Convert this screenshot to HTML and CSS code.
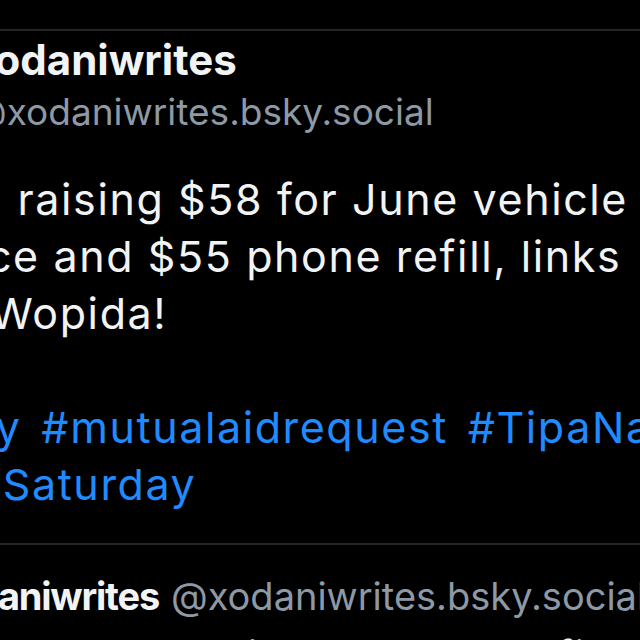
FILE: index.html
```html
<!DOCTYPE html>
<html lang="en">
<head>
  <meta charset="UTF-8" />
  <meta name="viewport" content="width=device-width, initial-scale=1" />
  <title>Post thread</title>
  <link rel="stylesheet" href="styles.css">
</head>
<body>
  <div id="thread">
    <!-- highlighted post -->
    <div class="post main">
      <div class="author">
        <div class="avatar"></div>
        <div class="names">
          <div class="name">xodaniwrites</div>
          <div class="handle">@xodaniwrites.bsky.social</div>
        </div>
      </div>
      <p class="text">
        Hey, I'm raising $58 for June vehicle<br>
        insurance and $55 phone refill, links<br>
        in bio / Wopida!<br>
        <br>
        <span class="tags"><a href="#">#poverty</a> <a href="#">#mutualaidrequest</a> <a href="#">#TipaNative</a><br>
        <a href="#">#MutualSaturday</a></span>
      </p>
    </div>

    <!-- reply -->
    <div class="post reply">
      <div class="avatar small"></div>
      <div class="reply-body">
        <div class="reply-head">
          <span class="name">xodaniwrites</span>
          <span class="handle">@xodaniwrites.bsky.social</span>
        </div>
        <p class="text">Here's all the links to my profile for more info!</p>
      </div>
    </div>
  </div>
</body>
</html>
```

FILE: styles.css
```css
body { margin: 0; background: #000; overflow: hidden; font-family: Inter, "Noto Sans", sans-serif; }
#thread { margin-left: -174px; width: 1100px; padding-top: 29px; }
.post { border-top: 2px solid #232527; }
.main { padding-top: 2px; }
.author { display: flex; align-items: flex-start; gap: 41px; }
.avatar { width: 104px; height: 104px; flex: none; border-radius: 50%; background: #1c2127; }
.name { color: #f1f3f5; font-weight: 700; font-size: 42px; line-height: 53px; }
.handle { color: #8d99a5; font-size: 37px; line-height: 52px; }
.text { color: #f1f3f5; font-size: 43px; line-height: 57px; letter-spacing: 1.6px; margin: 33px 0 0; }
.text a { color: #208bfe; text-decoration: none; }
.tags { word-spacing: 6px; }
.main .text { margin-bottom: 30px; }
.reply { display: flex; align-items: flex-start; gap: 19px; padding-top: 28px; }
.avatar.small { width: 88px; height: 88px; }
.reply-head { display: flex; gap: 12px; align-items: baseline; white-space: nowrap; }
.reply-head .name { font-size: 38px; line-height: 46px; letter-spacing: -1.2px; }
.reply-head .handle { font-size: 38px; line-height: 46px; }
.reply .text { margin-top: 9px; white-space: nowrap; }
```
